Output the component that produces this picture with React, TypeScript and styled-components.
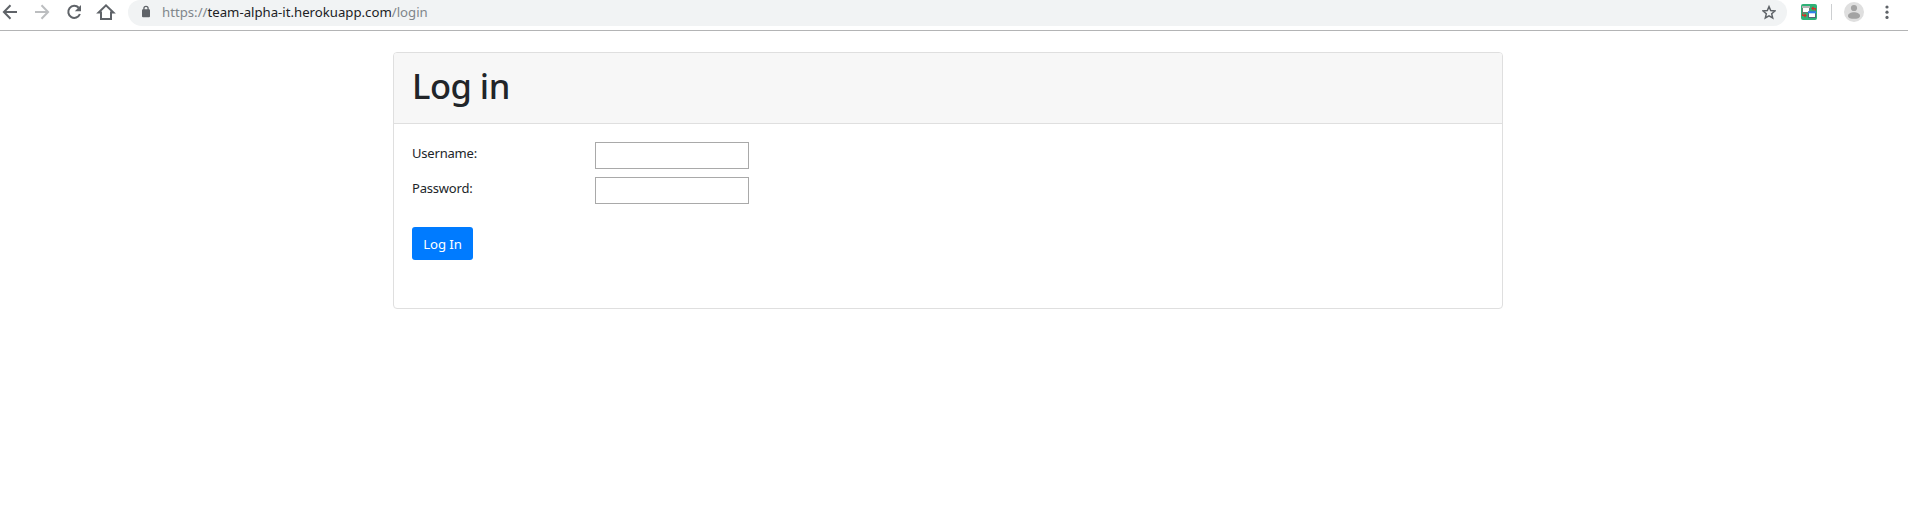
import React from "react";
import styled, { createGlobalStyle } from "styled-components";

const GlobalStyle = createGlobalStyle`
  *, *::before, *::after { box-sizing: border-box; }
  html, body { margin: 0; background: #fff; overflow: hidden; }
  body { font-family: "Segoe UI", "Noto Sans", "Open Sans", sans-serif; color: #212529; }
`;

const Page = styled.div`
  height: 519px;
  background: #fff;
`;

const Toolbar = styled.header`
  display: flex;
  align-items: flex-start;
  gap: 12px;
  height: 31px;
  border-bottom: 1px solid #b3b4b5;
`;

const NavButton = styled.span<{ $muted?: boolean }>`
  display: flex;
  justify-content: center;
  width: 20px;
  height: 24px;
  color: ${(p) => (p.$muted ? "#bcbec0" : "#5f6368")};
  svg { flex: none; display: block; }
`;

const AddressBar = styled.div`
  display: flex;
  align-items: center;
  width: 1659px;
  height: 26px;
  padding: 0 11px 2px 14px;
  background: #f1f3f4;
  border-radius: 12px 12px 14px 14px;
  color: #5f6368;
  svg { flex: none; display: block; }
`;

const Url = styled.span`
  flex: 1;
  margin-left: 12px;
  font-size: 13.2px;
  line-height: 20px;
  color: #80868b;
  b { font-weight: 400; color: #202124; }
`;

const Actions = styled.div`
  display: flex;
  align-items: center;
  height: 24px;
  margin-left: 2px;
  svg { flex: none; display: block; }
`;

const Divider = styled.span`
  width: 1px;
  height: 16px;
  margin: 0 12px 0 14px;
  background: #cdcfd1;
`;

const MenuSlot = styled.span`
  margin-left: 20.5px;
`;

const Card = styled.main`
  width: 1110px;
  height: 257px;
  margin: 21px 0 0 393px;
  border: 1px solid #dfdfdf;
  border-radius: 4px;
`;

const CardHeader = styled.div`
  height: 71px;
  padding: 11px 18px;
  background: #f7f7f7;
  border-bottom: 1px solid #dfdfdf;
  border-radius: 3px 3px 0 0;
`;

const Title = styled.h1`
  margin: 0;
  font-size: 34.5px;
  font-weight: 500;
  line-height: 44px;
  letter-spacing: -0.5px;
`;

const Form = styled.form`
  padding: 18px;
`;

const Field = styled.label`
  display: grid;
  grid-template-columns: 183px 154px;
  height: 35px;
`;

const Label = styled.span`
  font-size: 13px;
  line-height: 22px;
  letter-spacing: -0.2px;
`;

const Input = styled.input`
  width: 154px;
  height: 27px;
  padding: 1px 4px;
  border: 1px solid #a9a9a9;
  border-radius: 0;
  background: #fff;
  font: inherit;
  font-size: 14px;
  outline: none;
`;

const SubmitButton = styled.button`
  display: block;
  width: 61px;
  height: 33px;
  margin-top: 15px;
  padding: 1px 0 0;
  border: 0;
  border-radius: 3px;
  background: #007bff;
  color: #fff;
  font-family: inherit;
  font-size: 13.2px;
  line-height: 32px;
  text-align: center;
  letter-spacing: -0.1px;
  white-space: nowrap;
`;

const BackIcon = () => (
  <svg width="20" height="24" viewBox="0 0 20 24" fill="none" stroke="currentColor" strokeWidth="2">
    <path d="M17 12H4.4M10.5 5.2 3.9 12l6.6 6.8" />
  </svg>
);

const ForwardIcon = () => (
  <svg width="20" height="24" viewBox="0 0 20 24" fill="none" stroke="currentColor" strokeWidth="2">
    <path d="M3 12h12.6M9.5 5.2l6.6 6.8-6.6 6.8" />
  </svg>
);

const ReloadIcon = () => (
  <svg width="20" height="24" viewBox="0 0 20 24">
    <path d="M14.7 7.8A6 6 0 1 0 15.9 14" fill="none" stroke="currentColor" strokeWidth="2" />
    <path d="M17 5v6.2h-6.2z" fill="currentColor" />
  </svg>
);

const HomeIcon = () => (
  <svg width="20" height="24" viewBox="0 0 20 24" fill="none" stroke="currentColor" strokeWidth="2">
    <path d="M2.6 12.5H5V19h10v-6.500h2.400L10 5.300z" />
  </svg>
);

const LockIcon = () => (
  <svg width="8" height="24" viewBox="0 0 8 24">
    <path d="M1.900 10V8.500a2.100 2.100 0 0 1 4.200 0V10" fill="none" stroke="currentColor" strokeWidth="1.300" />
    <rect y="9.300" width="8" height="8" rx="1" fill="currentColor" />
  </svg>
);

const StarIcon = () => (
  <svg width="14" height="24" viewBox="0 0 14 24" fill="none" stroke="currentColor" strokeWidth="1.500">
    <path d="M7 6.600l1.700 4 4.200.4-3.200 2.800 1 4.200L7 15.800 3.300 18l1-4.200L1.100 11l4.200-.4z" />
  </svg>
);

const ExtensionIcon = () => (
  <svg width="16" height="16" viewBox="0 0 16 16">
    <rect width="16" height="16" rx="2" fill="#2fb277" />
    <rect x="1.500" y="2.500" width="7" height="6" fill="#fff" stroke="#66806f" />
    <path d="M1 2h8v2H1z" fill="#b5b5b5" />
    <rect x="7.500" y="8" width="7" height="5.500" fill="#fff" stroke="#536779" />
    <path d="M7 7.300h8v2H7z" fill="#2f82ee" />
    <path d="M14.400 6.500V4.500h-3.400M12.500 3 11 4.500 12.500 6M1.600 9.500v2h3.400M3.500 10 5 11.500l-1.500 1.500" fill="none" stroke="#d3302c" strokeWidth="1.200" />
  </svg>
);

const AvatarIcon = () => (
  <svg width="20" height="20" viewBox="0 0 20 20">
    <circle cx="10" cy="10" r="10" fill="#dfdfdf" />
    <circle cx="10" cy="6" r="3.100" fill="#a3a3a3" />
    <path d="M4 14c0-4.900 12-4.900 12 0 0 2.200-2.700 2.800-6 2.800S4 16.200 4 14z" fill="#a3a3a3" />
  </svg>
);

const MenuIcon = () => (
  <svg width="4" height="14" viewBox="0 0 4 14" fill="#5f6368">
    <circle cx="2" cy="2" r="1.600" />
    <circle cx="2" cy="7.200" r="1.600" />
    <circle cx="2" cy="12.400" r="1.600" />
  </svg>
);

export default function App() {
  return (
    <Page>
      <GlobalStyle />
      <Toolbar>
        <NavButton><BackIcon /></NavButton>
        <NavButton $muted><ForwardIcon /></NavButton>
        <NavButton><ReloadIcon /></NavButton>
        <NavButton><HomeIcon /></NavButton>
        <AddressBar>
          <LockIcon />
          <Url>https://<b>team-alpha-it.herokuapp.com</b>/login</Url>
          <StarIcon />
        </AddressBar>
        <Actions>
          <ExtensionIcon />
          <Divider />
          <AvatarIcon />
          <MenuSlot><MenuIcon /></MenuSlot>
        </Actions>
      </Toolbar>
      <Card>
        <CardHeader><Title>Log in</Title></CardHeader>
        <Form>
          <Field>
            <Label>Username:</Label>
            <Input type="text" />
          </Field>
          <Field>
            <Label>Password:</Label>
            <Input type="password" />
          </Field>
          <SubmitButton type="button">Log In</SubmitButton>
        </Form>
      </Card>
    </Page>
  );
}
